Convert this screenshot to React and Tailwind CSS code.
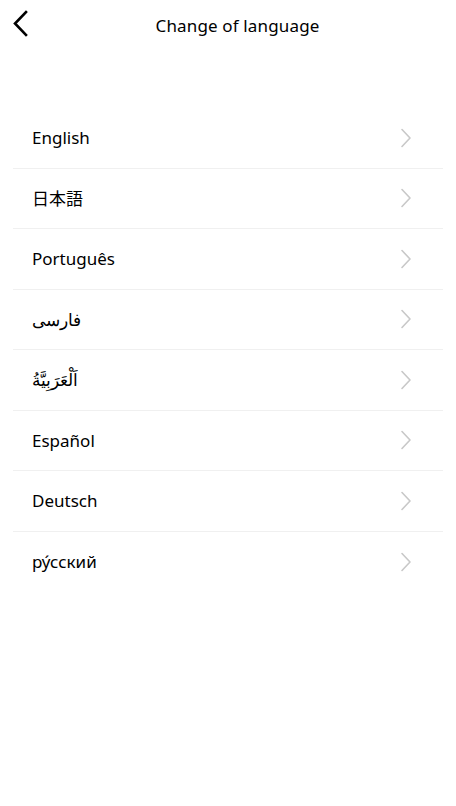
import React from 'react';

const languages = ['English', '日本語', 'Português', 'فارسی', 'اَلْعَرَبِيَّةُ', 'Español', 'Deutsch', 'ру́сский'];

const Chevron = ({ className }) => (
  <svg width="12" height="20" viewBox="0 0 12 20" fill="none" className={className}>
    <path d="M2 1.5 L10 10 L2 18.5" stroke="#c8c8c8" strokeWidth="1.6" strokeLinecap="round" strokeLinejoin="round" />
  </svg>
);

const App = () => {
  return (
    <div className="w-[456px] h-[806px] bg-white text-black" style={{ fontFamily: '"Noto Sans", "Noto Sans CJK JP", sans-serif' }}>
      <header className="relative h-[52px] flex items-center justify-center pl-[19px] pb-[2px]">
        <button className="absolute left-[11px] top-[10px] p-0">
          <svg width="20" height="28" viewBox="0 0 20 28" fill="none">
            <path d="M15 2 L4 13.5 L15 25" stroke="#000" strokeWidth="2.6" strokeLinecap="square" />
          </svg>
        </button>
        <h1 className="text-[17px] leading-none font-normal tracking-[0.15px]">Change of language</h1>
      </header>

      <ul className="mt-[56px] mx-[13px]">
        {languages.map((lang, i) => (
          <li
            key={lang}
            className={`h-[60.5px] flex items-center justify-between pl-[19px] pr-[31px] ${i < languages.length - 1 ? 'border-b border-[#f0f0f0]' : ''}`}
          >
            <span className="text-[17px]" dir="auto">{lang}</span>
            <Chevron />
          </li>
        ))}
      </ul>
    </div>
  );
};

export default App;
